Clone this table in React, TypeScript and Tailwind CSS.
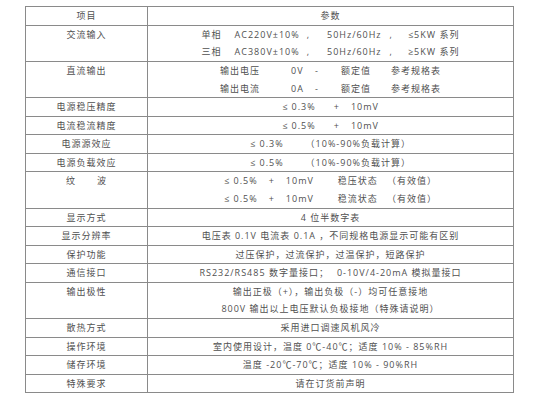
import React from "react";

type Seg = { t: string; c?: string };
type Row = { label: React.ReactNode; lines: Seg[][] };

const rows: Row[] = [
  { label: "项目", lines: [[{ t: "参数" }]] },
  {
    label: "交流输入",
    lines: [
      [
        { t: "单相" },
        { t: "AC220V±10%", c: "ml-[13px]" },
        { t: ",", c: "ml-[7px]" },
        { t: "50Hz/60Hz", c: "ml-[17px]" },
        { t: ",", c: "ml-[8px]" },
        { t: "≤5KW 系列", c: "ml-[15px]" },
      ],
      [
        { t: "三相" },
        { t: "AC380V±10%", c: "ml-[13px]" },
        { t: ",", c: "ml-[7px]" },
        { t: "50Hz/60Hz", c: "ml-[17px]" },
        { t: ",", c: "ml-[8px]" },
        { t: "≥5KW 系列", c: "ml-[15px]" },
      ],
    ],
  },
  {
    label: "直流输出",
    lines: [
      [
        { t: "输出电压" },
        { t: "0V", c: "ml-[31px] inline-block w-[14px] text-left" },
        { t: "-", c: "ml-[10px]" },
        { t: "额定值", c: "ml-[22px]" },
        { t: "参考规格表", c: "ml-[20px]" },
      ],
      [
        { t: "输出电流" },
        { t: "0A", c: "ml-[31px] inline-block w-[14px] text-left" },
        { t: "-", c: "ml-[10px]" },
        { t: "额定值", c: "ml-[22px]" },
        { t: "参考规格表", c: "ml-[20px]" },
      ],
    ],
  },
  {
    label: "电源稳压精度",
    lines: [[{ t: "≤ 0.3%" }, { t: "+", c: "ml-[18px]" }, { t: "10mV", c: "ml-[11px]" }]],
  },
  {
    label: "电流稳流精度",
    lines: [[{ t: "≤ 0.5%" }, { t: "+", c: "ml-[18px]" }, { t: "10mV", c: "ml-[11px]" }]],
  },
  {
    label: "电源源效应",
    lines: [[{ t: "≤ 0.3%" }, { t: "（10%-90%负载计算）", c: "ml-[22px]" }]],
  },
  {
    label: "电源负载效应",
    lines: [[{ t: "≤ 0.5%" }, { t: "（10%-90%负载计算）", c: "ml-[22px]" }]],
  },
  {
    label: (
      <>
        <span>纹</span>
        <span className="ml-[21px]">波</span>
      </>
    ),
    lines: [
      [
        { t: "≤ 0.5%" },
        { t: "+", c: "ml-[11px]" },
        { t: "10mV", c: "ml-[11px]" },
        { t: "稳压状态", c: "ml-[24px]" },
        { t: "（有效值）", c: "ml-[9px]" },
      ],
      [
        { t: "≤ 0.5%" },
        { t: "+", c: "ml-[11px]" },
        { t: "10mV", c: "ml-[11px]" },
        { t: "稳流状态", c: "ml-[24px]" },
        { t: "（有效值）", c: "ml-[9px]" },
      ],
    ],
  },
  { label: "显示方式", lines: [[{ t: "4 位半数字表" }]] },
  {
    label: "显示分辨率",
    lines: [[{ t: "电压表 0.1V 电流表 0.1A ，不同规格电源显示可能有区别" }]],
  },
  { label: "保护功能", lines: [[{ t: "过压保护，过流保护，过温保护，短路保护" }]] },
  {
    label: "通信接口",
    lines: [[{ t: "RS232/RS485 数字量接口；" }, { t: "0-10V/4-20mA 模拟量接口", c: "ml-[8px]" }]],
  },
  {
    label: "输出极性",
    lines: [
      [{ t: "输出正极（+），输出负极（-）均可任意接地" }],
      [{ t: "800V 输出以上电压默认负极接地（特殊请说明）" }],
    ],
  },
  { label: "散热方式", lines: [[{ t: "采用进口调速风机风冷" }]] },
  { label: "操作环境", lines: [[{ t: "室内使用设计，温度 0℃-40℃；适度 10% - 85%RH" }]] },
  { label: "储存环境", lines: [[{ t: "温度 -20℃-70℃；适度 10% - 90%RH" }]] },
  { label: "特殊要求", lines: [[{ t: "请在订货前声明" }]] },
];

export default function App() {
  return (
    <div className="w-[538px] h-[400px] bg-white overflow-hidden pt-[6px] pl-[25px] font-['Open_Sans','Noto_Sans_CJK_SC',sans-serif] text-[9px] tracking-[1px] text-[#505050]">
      <div className="w-[489px] border border-[#8a8a8a]">
        {rows.map((r, i) => {
          const dbl = r.lines.length > 1;
          return (
            <div
              key={i}
              className={`grid grid-cols-[122px_1fr] ${i > 0 ? "border-t border-[#8a8a8a]" : ""}`}
            >
              <div className="border-r border-[#8a8a8a] text-center">
                <div className={`${dbl ? "h-[17.7px] leading-[17.7px]" : "h-[17.5px] leading-[17.5px]"} whitespace-pre`}>
                  {r.label}
                </div>
              </div>
              <div className="flex flex-col">
                {r.lines.map((ln, j) => (
                  <div
                    key={j}
                    className={`${dbl ? "h-[17.7px] leading-[17.7px]" : "h-[17.5px] leading-[17.5px]"} text-center whitespace-pre`}
                  >
                    {ln.map((s, k) => (
                      <span key={k} className={s.c ?? ""}>
                        {s.t}
                      </span>
                    ))}
                  </div>
                ))}
              </div>
            </div>
          );
        })}
      </div>
    </div>
  );
}
